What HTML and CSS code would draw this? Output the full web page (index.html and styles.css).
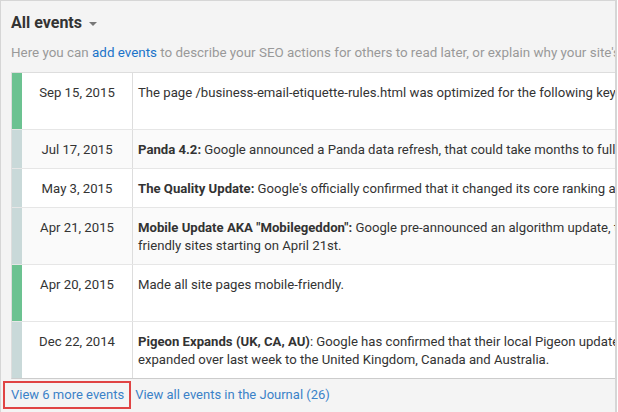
FILE: index.html
```html
<!DOCTYPE html>
<html lang="en">
<head>
  <meta charset="UTF-8">
  <meta name="viewport" content="width=device-width, initial-scale=1.0">
  <title>All events</title>
  <link rel="stylesheet" href="styles.css">
</head>
<body>

  <div class="panel">
    <div class="header">
      <h2 class="title">All events <span class="caret"></span></h2>
      <p class="hint">Here you can <a href="#">add events</a> to describe your SEO actions for others to read later, or explain why your site's traffic changed.</p>
    </div>

    <div class="events">
      <div class="row tall">
        <div class="bar user"></div>
        <div class="date">Sep 15, 2015</div>
        <div class="text">The page /business-email-etiquette-rules.html was optimized for the following keywords: business email etiquette, email etiquette rules.</div>
      </div>
      <div class="row alt">
        <div class="bar google"></div>
        <div class="date">Jul 17, 2015</div>
        <div class="text"><b>Panda 4.2:</b> Google announced a Panda data refresh, that could take months to fully roll out.</div>
      </div>
      <div class="row">
        <div class="bar google"></div>
        <div class="date">May 3, 2015</div>
        <div class="text"><b>The Quality Update:</b> Google's officially confirmed that it changed its core ranking algorithm.</div>
      </div>
      <div class="row tall alt">
        <div class="bar google"></div>
        <div class="date">Apr 21, 2015</div>
        <div class="text"><b>Mobile Update AKA "Mobilegeddon":</b> Google pre-announced an algorithm update, that would boost mobile-<br>friendly sites starting on April 21st.</div>
      </div>
      <div class="row tall">
        <div class="bar user"></div>
        <div class="date">Apr 20, 2015</div>
        <div class="text">Made all site pages mobile-friendly.</div>
      </div>
      <div class="row tall">
        <div class="bar google"></div>
        <div class="date">Dec 22, 2014</div>
        <div class="text"><b>Pigeon Expands (UK, CA, AU)</b>: Google has confirmed that their local Pigeon update has<br>expanded over last week to the United Kingdom, Canada and Australia.</div>
      </div>
    </div>

    <div class="footer">
      <a href="#" class="more">View 6 more events</a>
      <a href="#">View all events in the Journal (26)</a>
    </div>
  </div>

</body>
</html>
```

FILE: styles.css
```css
body {
  margin: 0;
  font-family: Roboto, Arial, sans-serif;
  background-color: #fff;
}

.panel {
  box-sizing: border-box;
  width: 617px;
  height: 420px;
  background-color: #f4f4f4;
  border: 1px solid #d6d6d6;
  border-right-width: 2px;
  overflow: hidden;
}

.header {
  padding: 0 0 0 10px;
}

.title {
  margin: 0;
  padding-top: 12px;
  height: 22px;
  font-size: 16px;
  line-height: 20px;
  font-weight: bold;
  color: #333;
}

.caret {
  display: inline-block;
  margin-left: 3px;
  vertical-align: middle;
  border-left: 4px solid transparent;
  border-right: 4px solid transparent;
  border-top: 4px solid #777;
}

.hint {
  margin: 0;
  padding-top: 9px;
  height: 28px;
  font-size: 13.4px;
  line-height: 18px;
  color: #999;
  white-space: nowrap;
}

.hint a {
  color: #1a73c9;
  text-decoration: none;
}

.events {
  margin-left: 10px;
  width: 1000px;
  border-top: 1px solid #ddd;
  border-left: 1px solid #ddd;
  border-bottom: 1px solid #ccc;
  background-color: #fff;
}

.row {
  display: grid;
  grid-template-columns: 10px 111px 1fr;
  height: 38px;
  border-bottom: 1px solid #e6e6e6;
  font-size: 13.15px;
  line-height: 18px;
  color: #333;
}

.row:last-child {
  border-bottom: none;
  height: 56px;
}

.row.tall {
  height: 56px;
}

.row.alt {
  background-color: #fafafa;
}

.bar.user {
  background-color: #6cc291;
}

.bar.google {
  background-color: #c9d9d9;
}

.date {
  padding-top: 11px;
  text-align: center;
  border-right: 1px solid #ddd;
}

.text {
  padding: 11px 0 0 5px;
}

.text b {
  color: #333;
}

.footer {
  display: flex;
  align-items: center;
  gap: 4px;
  height: 31px;
  padding-left: 2px;
  font-size: 13px;
}

.footer a {
  color: #3b82c8;
  text-decoration: none;
}

.footer .more {
  padding: 4px 5px 5px 6px;
  border: 2px solid #e04444;
}
```
